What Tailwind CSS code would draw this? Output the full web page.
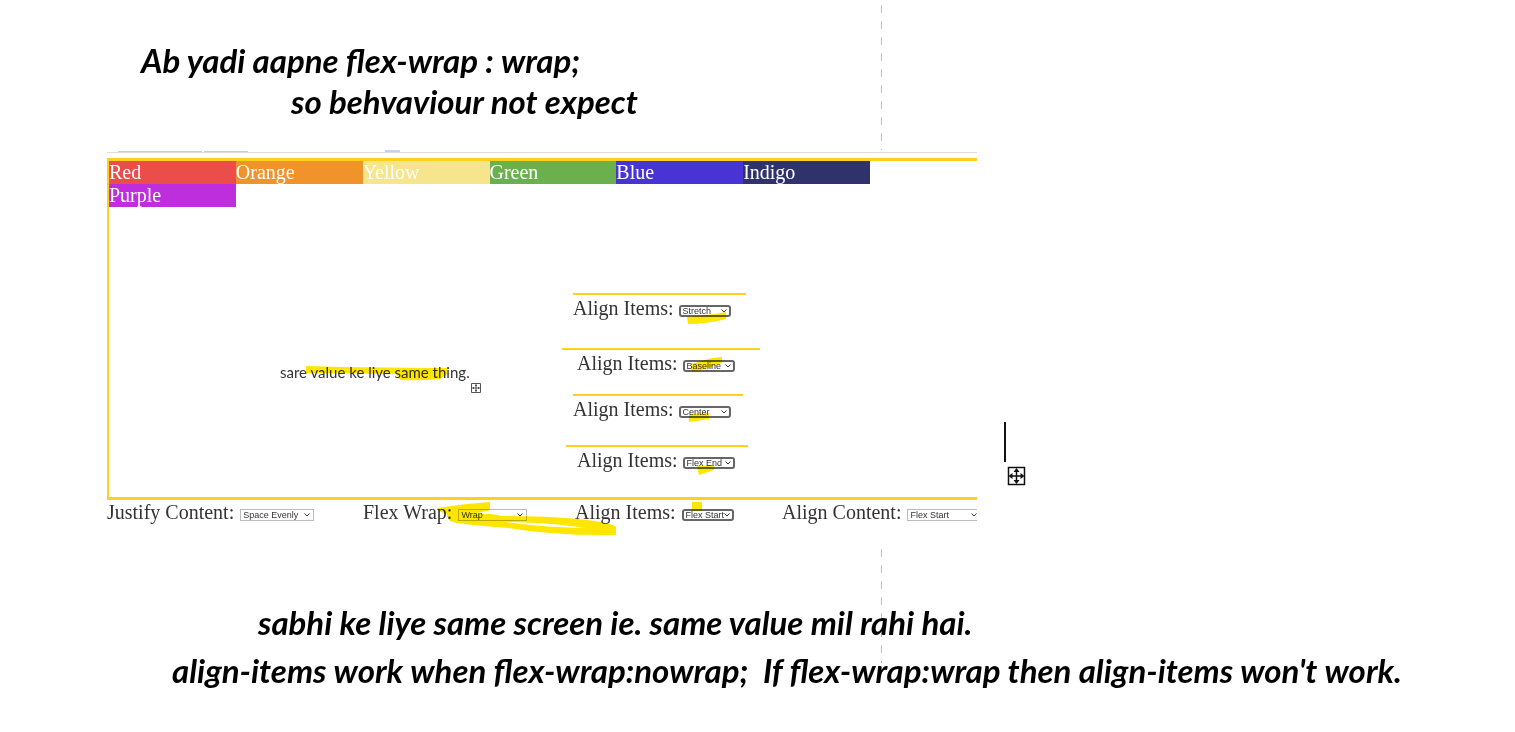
<!DOCTYPE html>
<html lang="hi-Latn">
<head>
<meta charset="utf-8">
<meta name="viewport" content="width=device-width, initial-scale=1">
<title>flex-wrap and align-items notes</title>
<script src="https://cdn.jsdelivr.net/npm/@tailwindcss/browser@4"></script>
</head>
<body class="bg-white text-black">
<main class="relative overflow-hidden pt-10 pb-9 font-['Lato',sans-serif]">
  <!-- dashed page guide -->
  <svg class="absolute left-[881px] top-0 h-[664px] w-px" aria-hidden="true"><path d="M.5 5V663" stroke="#bdbdbd" stroke-dasharray="8 8"/></svg>

  <header class="relative text-[33px] leading-[41px] font-bold italic whitespace-nowrap">
    <p class="pl-[141px]">Ab yadi aapne flex-wrap : wrap;</p>
    <p class="pl-[291px]">so behvaviour not expect</p>
  </header>

  <figure class="relative mt-7 ml-[107px] h-[398px] max-w-[870px] overflow-hidden bg-white font-['Liberation_Serif',serif] text-xl text-[#333]">
    <div class="flex h-0.5 items-end pl-[11px]">
      <span class="mr-px h-px w-[84px] bg-[#ccc]"></span><span class="ml-px h-px w-[44px] bg-[#ccc]"></span><span class="ml-[137px] h-0.5 w-[15px] bg-[#b9d7f3]"></span>
    </div>
    <div class="h-px bg-[#dcdcdc]"></div>

    <section class="mt-[5px] h-[342px] border-t-3 border-b-3 border-l-2 border-[#ffd11f]">
      <ul class="grid w-[761px] grid-cols-6 leading-[23px] text-white">
        <li class="bg-[#eb4d4b]">Red</li>
        <li class="bg-[#f0932b]">Orange</li>
        <li class="bg-[#f6e58d]">Yellow</li>
        <li class="bg-[#6ab04c]">Green</li>
        <li class="bg-[#4834d4]">Blue</li>
        <li class="bg-[#30336b]">Indigo</li>
        <li class="bg-[#be2edd]">Purple</li>
      </ul>
      <div class="flex">
        <div class="w-[453px] pt-[155px] pl-[171px]">
          <p class="font-['Lato',sans-serif] text-[15px] leading-5">sare value ke liye same thing.</p>
          <svg class="mt-px ml-[191px] size-2.5" viewBox="0 0 10 10" fill="none" stroke="#555" aria-hidden="true"><path d="M.5 .5h9v9h-9zM5 1v8M1 5h8"/><path d="M4 2.5h2M4 7.5h2M2.500 4v2M7.500 4v2"/></svg>
        </div>
        <div class="pt-[86px]">
          <div class="ml-[11px] h-[55px] w-[173px] border-t-2 border-[#ffd11f]">
            <div class="flex gap-[5px]"><label for="a1" class="leading-[26px]">Align Items:</label>
            <span class="relative mt-[10px] h-3"><select id="a1" class="block h-3 w-[52px] appearance-none rounded-[3px] border-2 border-[#666] pl-0.5 font-['Liberation_Sans',sans-serif] text-[9px] leading-2"><option>Stretch</option></select><svg class="pointer-events-none absolute top-1 right-1 h-1 w-1.5" viewBox="0 0 6 4" fill="none" stroke="#333"><path d="M.5 .5 3 3 5.500 .5"/></svg></span></div>
          </div>
          <div class="h-[46px] w-[198px] border-t-2 border-[#ffd11f] pl-[15px]">
            <div class="flex gap-[5px]"><label for="a2" class="leading-[26px]">Align Items:</label>
            <span class="relative mt-[10px] h-3"><select id="a2" class="block h-3 w-[52px] appearance-none rounded-[3px] border-2 border-[#666] pl-0.5 font-['Liberation_Sans',sans-serif] text-[9px] leading-2"><option>Baseline</option></select><svg class="pointer-events-none absolute top-1 right-1 h-1 w-1.5" viewBox="0 0 6 4" fill="none" stroke="#333"><path d="M.5 .5 3 3 5.500 .5"/></svg></span></div>
          </div>
          <div class="ml-[11px] h-[51px] w-[170px] border-t-2 border-[#ffd11f]">
            <div class="flex gap-[5px]"><label for="a3" class="leading-[26px]">Align Items:</label>
            <span class="relative mt-[10px] h-3"><select id="a3" class="block h-3 w-[52px] appearance-none rounded-[3px] border-2 border-[#666] pl-0.5 font-['Liberation_Sans',sans-serif] text-[9px] leading-2"><option>Center</option></select><svg class="pointer-events-none absolute top-1 right-1 h-1 w-1.5" viewBox="0 0 6 4" fill="none" stroke="#333"><path d="M.5 .5 3 3 5.500 .5"/></svg></span></div>
          </div>
          <div class="ml-1 w-[182px] border-t-2 border-[#ffd11f] pl-[11px]">
            <div class="flex gap-[5px]"><label for="a4" class="leading-[26px]">Align Items:</label>
            <span class="relative mt-[10px] h-3"><select id="a4" class="block h-3 w-[52px] appearance-none rounded-[3px] border-2 border-[#666] pl-0.5 font-['Liberation_Sans',sans-serif] text-[9px] leading-2"><option>Flex End</option></select><svg class="pointer-events-none absolute top-1 right-1 h-1 w-1.5" viewBox="0 0 6 4" fill="none" stroke="#333"><path d="M.5 .5 3 3 5.500 .5"/></svg></span></div>
          </div>
        </div>
      </div>
    </section>

    <div class="grid grid-cols-[256px_212px_207px_208px]">
      <div class="flex gap-1.5"><label for="b1" class="leading-6">Justify Content:</label>
        <span class="relative mt-[9px] h-3"><select id="b1" class="block h-3 w-[74px] appearance-none border border-[#bbb] pl-0.5 font-['Liberation_Sans',sans-serif] text-[9px] leading-2.5"><option>Space Evenly</option></select><svg class="pointer-events-none absolute top-1 right-1 h-1 w-1.5" viewBox="0 0 6 4" fill="none" stroke="#333"><path d="M.5 .5 3 3 5.500 .5"/></svg></span></div>
      <div class="flex gap-1.5"><label for="b2" class="leading-6">Flex Wrap:</label>
        <span class="relative mt-[9px] h-3"><select id="b2" class="block h-3 w-[69px] appearance-none border border-[#bbb] pl-0.5 font-['Liberation_Sans',sans-serif] text-[9px] leading-2.5"><option>Wrap</option></select><svg class="pointer-events-none absolute top-1 right-1 h-1 w-1.5" viewBox="0 0 6 4" fill="none" stroke="#333"><path d="M.5 .5 3 3 5.500 .5"/></svg></span></div>
      <div class="flex gap-1.5"><label for="b3" class="leading-6">Align Items:</label>
        <span class="relative mt-[9px] h-3"><select id="b3" class="block h-3 w-[52px] appearance-none rounded-[3px] border-2 border-[#666] pl-0.5 font-['Liberation_Sans',sans-serif] text-[9px] leading-2"><option>Flex Start</option></select><svg class="pointer-events-none absolute top-1 right-1 h-1 w-1.5" viewBox="0 0 6 4" fill="none" stroke="#333"><path d="M.5 .5 3 3 5.500 .5"/></svg></span></div>
      <div class="flex gap-1.5"><label for="b4" class="leading-6">Align Content:</label>
        <span class="relative mt-[9px] h-3"><select id="b4" class="block h-3 w-[74px] appearance-none border border-[#bbb] pl-0.5 font-['Liberation_Sans',sans-serif] text-[9px] leading-2.5"><option>Flex Start</option></select><svg class="pointer-events-none absolute top-1 right-1 h-1 w-1.5" viewBox="0 0 6 4" fill="none" stroke="#333"><path d="M.5 .5 3 3 5.500 .5"/></svg></span></div>
    </div>

    <!-- highlighter strokes -->
    <svg class="pointer-events-none absolute top-0 left-0 h-[398px] w-[870px] mix-blend-multiply" viewBox="107 150 870 398" fill="#ffe600" aria-hidden="true">
      <path d="M306 366l36 1 91 1h14v6l-7 5q-20 2-40 1l-4-6-90-1z"/>
      <path d="M687 317l28-3 11-2v7q-20 5-38 5z"/>
      <path d="M691 364l21-6 10-1v6q-14 6-30 9z"/>
      <path d="M689 414l20-1v6l-20 3z"/>
      <path d="M697 466l17-1v5l-15 5z"/>
      <path d="M692 502h10v9h-10z"/>
      <path fill-rule="evenodd" d="M437 508q24-4 53-6v8l-16 4q18-1 27 2 66 0 100 6 15 3 15 5v8q-60 1-108-7-42-3-56-6-6-4-5-8-8-2-10-6zM506 522q30 5 78 6-30-5-78-6z"/>
    </svg>
  </figure>

  <!-- text caret and move handle -->
  <svg class="absolute left-[1004px] top-[422px] h-[64px] w-6" viewBox="0 0 24 64" fill="none" stroke="#111" aria-hidden="true">
    <path d="M1 0V40" stroke-width="2"/>
    <path d="M4.500 45.500h16v17h-16z" stroke-width="1.500"/>
    <path d="M12.500 48v12M6 54h13" stroke-width="1.500"/>
    <path d="M12.500 46l3 4h-6zM12.500 62l3-4h-6zM4.500 54l4-3v6zM20.500 54l-4-3v6z" fill="#111" stroke="none"/>
  </svg>

  <footer class="relative mt-[50px] text-[33px] leading-12 font-bold italic whitespace-nowrap">
    <p class="pl-[258px]">sabhi ke liye same screen ie. same value mil rahi hai.</p>
    <p class="pl-[172px]">align-items work when flex-wrap:nowrap;&nbsp; If flex-wrap:wrap then align-items won't work.</p>
  </footer>
</main>
</body>
</html>
